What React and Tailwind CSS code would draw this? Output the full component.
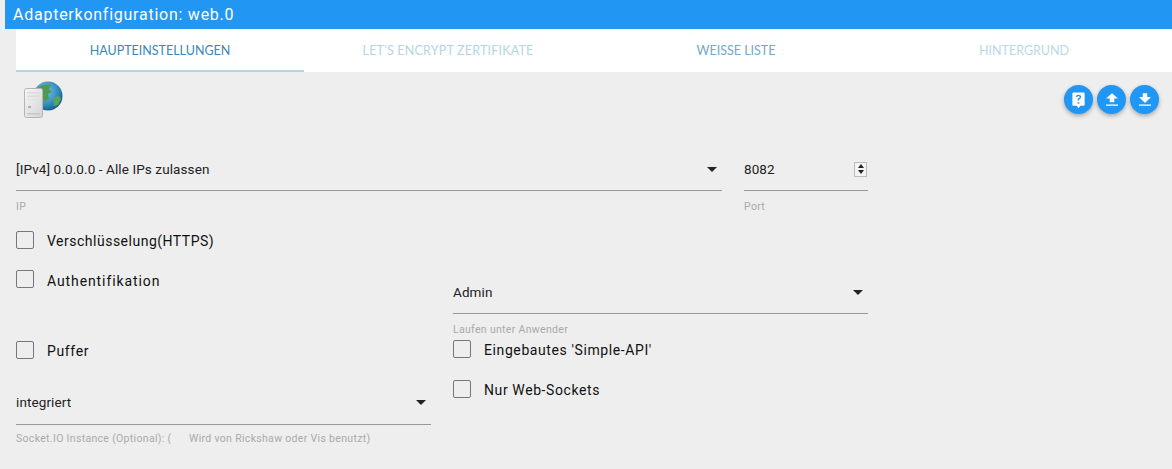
const tabs = [
  { label: "Haupteinstellungen", cls: "text-[#3a87b8] border-[#b5d3e8]" },
  { label: "Let's Encrypt Zertifikate", cls: "text-[#b4d5e8] border-transparent tracking-[0.2px]" },
  { label: "Weisse Liste", cls: "text-[#6fa9cc] border-transparent" },
  { label: "Hintergrund", cls: "text-[#b9d8e9] border-transparent" },
];

function Caret() {
  return <span className="h-0 w-0 border-x-[5px] border-t-[5px] border-x-transparent border-t-[#222]" />;
}

function Select({ value, label, className }) {
  return (
    <div className={className}>
      <div className="flex h-[44px] items-center justify-between border-b border-[#999] pt-[1px] pr-[5px] text-[13.5px] tracking-[0.1px] text-[#222]">
        <span>{value}</span>
        <Caret />
      </div>
      <div className="mt-[9px] h-[14px] text-[10.5px] leading-[14px] tracking-[0.32px] text-[#aaa]">{label}</div>
    </div>
  );
}

function Check({ label, className, tracking = "tracking-[0.6px]", shift = "translate-y-[1px]" }) {
  return (
    <label className={`flex h-[18px] items-center ${className || ""}`}>
      <span className="h-[18px] w-[18px] rounded-[2px] border border-[#777]" />
      <span className={`ml-[13px] text-[14px] text-[#111] ${tracking} ${shift}`}>{label}</span>
    </label>
  );
}

function RoundBtn({ children, size = "h-[18px] w-[18px]" }) {
  return (
    <button className="flex h-[29px] w-[29px] items-center justify-center rounded-full bg-[#2196f3] shadow-[0_2px_4px_rgba(0,0,0,0.3)]">
      <svg viewBox="0 0 24 24" className={size} fill="#fff">
        {children}
      </svg>
    </button>
  );
}

function ServerGlobe() {
  return (
    <svg viewBox="0 0 44 40" className="h-[40px] w-[44px]">
      <defs>
        <radialGradient id="sea" cx="40%" cy="35%" r="70%">
          <stop offset="0%" stopColor="#7cc4e8" />
          <stop offset="70%" stopColor="#2b86b8" />
          <stop offset="100%" stopColor="#16557f" />
        </radialGradient>
        <linearGradient id="case" x1="0" y1="0" x2="1" y2="1">
          <stop offset="0%" stopColor="#f6f6f6" />
          <stop offset="100%" stopColor="#d4d4d6" />
        </linearGradient>
      </defs>
      <circle cx="26" cy="15" r="14.5" fill="url(#sea)" />
      <path d="M17 6c4-3 9-3 12-2l-2 4 3 3-4 2 1 5-4 3-3-5-4-2z" fill="#4d9a55" />
      <path d="M31 17l6-2 2 3-3 6-4 1z" fill="#5aa35c" />
      <rect x="2.5" y="7.5" width="18" height="29" rx="2" fill="url(#case)" stroke="#b5b5b8" />
      <rect x="5" y="11" width="13" height="1.5" fill="#dcdcde" />
      <rect x="5" y="14.5" width="13" height="1.5" fill="#dcdcde" />
      <rect x="5" y="18" width="13" height="1.5" fill="#e4e4e6" />
      <rect x="6" y="25" width="3" height="2" fill="#b0b0b4" />
      <rect x="5" y="32" width="13" height="1.5" fill="#c8c8cc" />
    </svg>
  );
}

export default function App() {
  return (
    <div className="h-[469px] w-[1172px] overflow-hidden bg-[#eeeeee] font-['Roboto','Liberation_Sans',sans-serif]">
      <div className="ml-[5px] flex h-[29px] items-center bg-[#2196f3] pl-[8px] text-[16px] tracking-[0.75px] text-white">
        Adapterkonfiguration: web.0
      </div>
      <div className="ml-[16px] flex h-[43px] bg-white font-['Lato','Roboto',sans-serif]">
        {tabs.map((t) => (
          <div
            key={t.label}
            className={`flex w-[288px] items-center justify-center border-b-2 pt-[3px] text-[12.5px] uppercase ${t.cls}`}
          >
            {t.label}
          </div>
        ))}
      </div>

      <div className="pl-[16px]">
        <div className="flex h-[72px] items-start justify-between pr-[13px]">
          <div className="ml-[6px] mt-[9px]">
            <ServerGlobe />
          </div>
          <div className="mt-[13px] flex gap-[4px]">
            <RoundBtn size="h-[21px] w-[21px]">
              <path
                fillRule="evenodd"
                d="M6 4h12a1 1 0 0 1 1 1v13a1 1 0 0 1-1 1h-4l-2 3-2-3H6a1 1 0 0 1-1-1V5a1 1 0 0 1 1-1zm6 2.5c-1.9 0-3 1-3.1 2.6h1.7c.1-.7.5-1.1 1.3-1.1s1.3.4 1.3 1c0 .6-.3.9-1 1.4-.9.6-1.2 1.1-1.2 2.3v.4h1.6v-.3c0-.7.2-1 1-1.5.9-.6 1.4-1.3 1.4-2.4 0-1.5-1.2-2.4-3-2.4zM11 15v1.8h1.9V15z"
              />
            </RoundBtn>
            <RoundBtn>
              <path d="M9 15V10H4l8-7 8 7h-5v5zM4 18h16v1.5H4z" />
            </RoundBtn>
            <RoundBtn>
              <path d="M9 3h6v5h5l-8 8-8-8h5zM4 18h16v1.5H4z" />
            </RoundBtn>
          </div>
        </div>

        <div className="flex">
          <Select value="[IPv4] 0.0.0.0 - Alle IPs zulassen" label="IP" className="mr-[22px] w-[706px] pt-[3px]" />
          <div className="w-[124px] pt-[3px]">
            <div className="flex h-[44px] items-center justify-between border-b border-[#999] pt-[1px] pr-[1px] text-[13.5px] tracking-[0.1px] text-[#222]">
              <span>8082</span>
              <span className="flex h-[15px] w-[13px] flex-col items-center justify-center gap-[2px] border border-[#bbb] bg-[#f4f4f4]">
                <span className="h-0 w-0 border-x-[3px] border-b-[4px] border-x-transparent border-b-[#222]" />
                <span className="h-0 w-0 border-x-[3px] border-t-[4px] border-x-transparent border-t-[#222]" />
              </span>
            </div>
            <div className="mt-[9px] h-[14px] text-[10.5px] leading-[14px] tracking-[0.32px] text-[#aaa]">Port</div>
          </div>
        </div>

        <div className="flex">
          <div className="mr-[22px] w-[415px] pt-[17px]">
            <Check label="Verschlüsselung(HTTPS)" tracking="tracking-[0.5px]" />
            <Check label="Authentifikation" tracking="tracking-[0.9px]" shift="translate-y-[2px]" className="mt-[21px]" />
            <Check label="Puffer" tracking="tracking-[0.65px]" className="mt-[53px]" />
            <Select
              value="integriert"
              label="Socket.IO Instance (Optional): (      Wird von Rickshaw oder Vis benutzt)"
              className="mt-[22px] whitespace-pre [&>div:first-child]:pt-0 [&>div:last-child]:mt-[7px]"
            />
          </div>
          <div className="w-[415px] pt-[56px]">
            <Select value="Admin" label="Laufen unter Anwender" />
            <Check label="Eingebautes 'Simple-API'" className="mt-[3px]" />
            <Check label="Nur Web-Sockets" className="mt-[22px]" />
          </div>
        </div>
      </div>
    </div>
  );
}
